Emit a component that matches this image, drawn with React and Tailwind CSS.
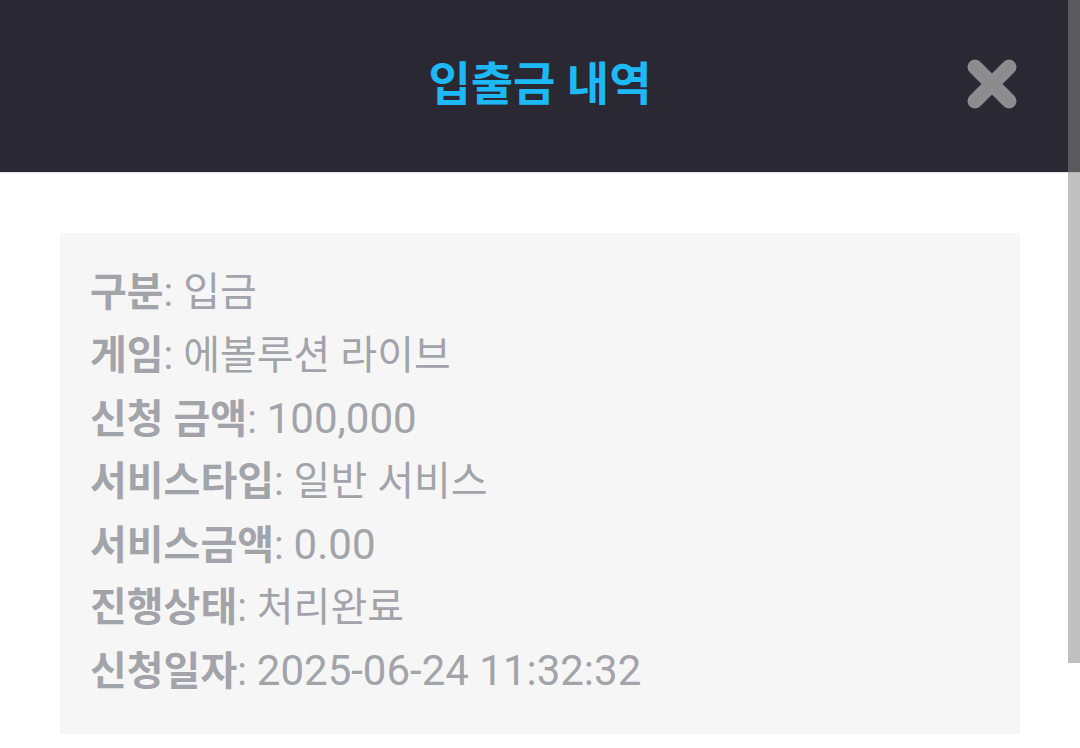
import React from 'react';

const rows = [
    ['구분', '입금'],
    ['게임', '에볼루션 라이브'],
    ['신청 금액', '100,000', true],
    ['서비스타입', '일반 서비스'],
    ['서비스금액', '0.00', true],
    ['진행상태', '처리완료'],
    ['신청일자', '2025-06-24 11:32:32', true],
];

export default function App() {
    return (
        <div
            className="relative w-[1080px] h-[748px] overflow-hidden bg-white"
            style={{ fontFamily: 'Roboto, "Noto Sans CJK KR", sans-serif' }}
        >
            {/* --- HEADER --- */}
            <div className="relative h-[173px] bg-[#2a2833] flex items-center justify-center border-b border-[#e6e6e8]">
                <h1 className="text-[46px] font-bold text-[#1cb9f6] leading-none -mt-[4px]">입출금 내역</h1>
                <button className="absolute left-[964px] top-[56px] w-[56px] h-[56px] flex items-center justify-center">
                    <svg width="56" height="56" viewBox="0 0 56 56">
                        <path d="M11 11L45 45M45 11L11 45" stroke="#8c8c8e" strokeWidth="15" strokeLinecap="round" />
                    </svg>
                </button>
            </div>

            {/* --- DETAILS --- */}
            <div className="px-[60px] pt-[60px]">
                <div className="w-[960px] bg-[#f6f6f6] pl-[30px] pt-[28px] pb-[32px]">
                    {rows.map(([label, value, numeric]) => (
                        <div key={label} className="h-[63px] text-[40px] leading-[63px] text-[#a2a4a9] whitespace-nowrap">
                            <span className="font-bold">{label}</span>:{' '}
                            <span className={numeric ? 'text-[42px]' : ''}>{value}</span>
                        </div>
                    ))}
                </div>
            </div>

            {/* scrollbar thumb */}
            <div className="absolute right-0 top-0 w-[12px] h-[663px] bg-[rgba(134,134,134,0.52)]"></div>
        </div>
    );
}
